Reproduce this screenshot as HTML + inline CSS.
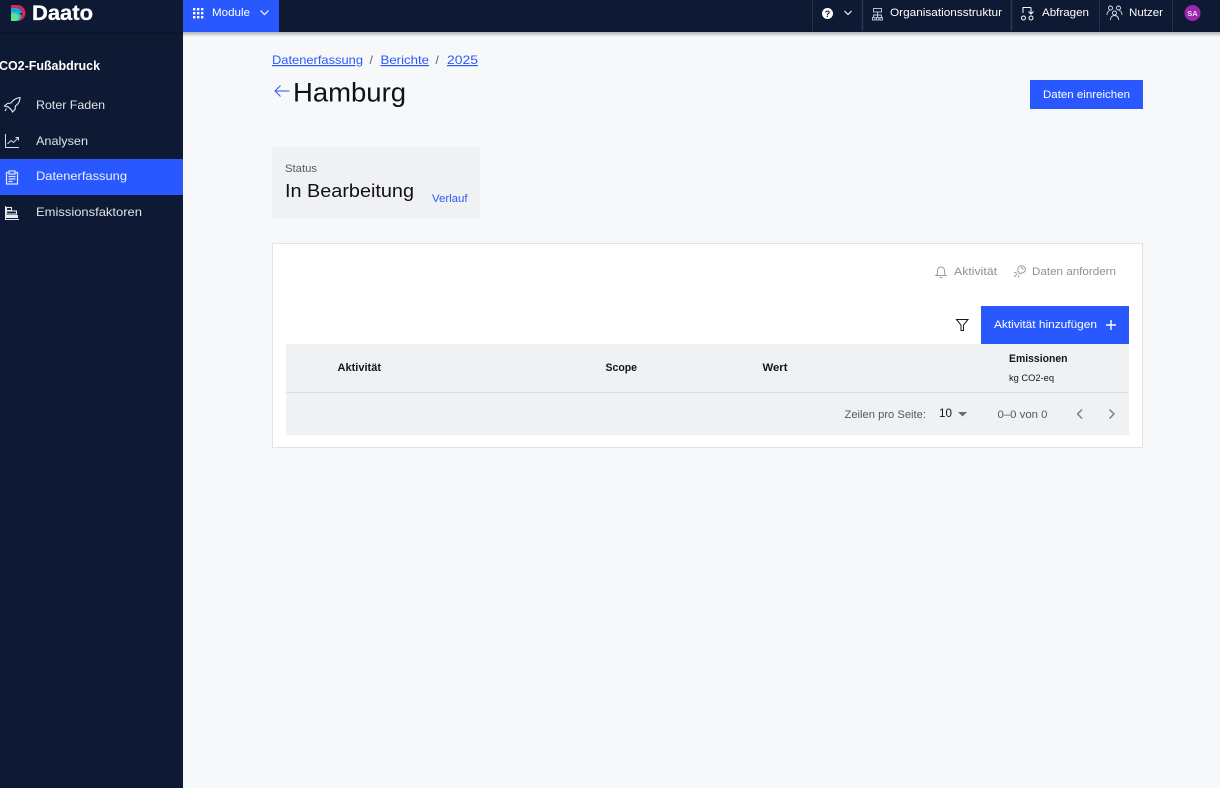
<!DOCTYPE html>
<html lang="de"><head><meta charset="utf-8"><title>Hamburg</title>
<style>
html,body{margin:0;padding:0;width:1220px;height:788px;overflow:hidden;background:#f7f8fa}
svg{display:block;position:absolute;left:0;top:0}
text{font-family:"Liberation Sans",sans-serif}
</style></head><body>
<svg width="1220" height="788" viewBox="0 0 1220 788" xmlns="http://www.w3.org/2000/svg">
<defs><linearGradient id="sh" x1="0" y1="0" x2="0" y2="1"><stop offset="0" stop-color="#000" stop-opacity=".28"/><stop offset="1" stop-color="#000" stop-opacity="0"/></linearGradient></defs>
<rect width="1220" height="788" fill="#f7f8fa"/>
<rect x="183" y="32" width="1037" height="5" fill="url(#sh)"/>
<rect x="0" y="0" width="183" height="788" fill="#0e1a33"/>
<rect x="0" y="0" width="1220" height="32" fill="#0e1a33"/>
<rect x="0" y="32" width="183" height="2" fill="#0a1529"/>
<!-- logo -->
<path d="M11 5h6.500a8 8 0 0 1 0 16H14v-3h3a5 5 0 0 0 0-10h-6z" fill="#d6265f"/>
<path d="M11 8h6a5.500 5.500 0 0 1 5 5H11z" fill="#17a5d6"/>
<path d="M11 12h5a6 6 0 0 1 5 3 5 5 0 0 1-4 6h-6z" fill="#2fbfc4"/>
<path d="M11 13.500h4.500a4 4 0 0 1 3 3.500 4 4 0 0 1-3 4H11z" fill="#5fe28a"/>
<text x="32" y="20" font-size="21" font-weight="700" fill="#fff" stroke="#fff" stroke-width=".3" textLength="61" lengthAdjust="spacingAndGlyphs">Daato</text>
<!-- module -->
<rect x="183" y="0" width="96" height="32" fill="#2a58ff"/>
<g fill="#fff"><rect x="193" y="8" width="2.400" height="2.400"/><rect x="197" y="8" width="2.400" height="2.400"/><rect x="201" y="8" width="2.400" height="2.400"/><rect x="193" y="12" width="2.400" height="2.400"/><rect x="197" y="12" width="2.400" height="2.400"/><rect x="201" y="12" width="2.400" height="2.400"/><rect x="193" y="16" width="2.400" height="2.400"/><rect x="197" y="16" width="2.400" height="2.400"/><rect x="201" y="16" width="2.400" height="2.400"/></g>
<text x="212" y="16" font-size="11" fill="#fff" textLength="38" lengthAdjust="spacingAndGlyphs">Module</text>
<path d="M260.500 10.500l4 4 4-4" fill="none" stroke="#fff" stroke-width="1.200"/>
<!-- top right -->
<g stroke="#26324a" stroke-width="1"><path d="M812.500 0v31M1099.500 0v31M1172.500 0v31"/></g>
<g stroke="#2b374f" stroke-width="1.500"><path d="M862.500 0v31M1011.500 0v31"/></g>
<circle cx="827.500" cy="13.500" r="5.500" fill="#fff"/>
<text x="827.500" y="17" font-size="9" font-weight="700" fill="#0e1a33" text-anchor="middle">?</text>
<path d="M844.500 11l3.500 3.500 3.500-3.500" fill="none" stroke="#fff" stroke-width="1.100"/>
<g fill="none" stroke="#c9ced8" stroke-width=".9"><rect x="873.500" y="8.500" width="8" height="3.500"/><path d="M877.500 12v3M873.500 17v-2h8v2M877.500 15v2"/><rect x="872.500" y="17.500" width="2.500" height="2.500"/><rect x="876.300" y="17.500" width="2.500" height="2.500"/><rect x="880" y="17.500" width="2.500" height="2.500"/></g>
<text x="890" y="16" font-size="11" fill="#fff" textLength="112" lengthAdjust="spacingAndGlyphs">Organisationsstruktur</text>
<g fill="none" stroke="#fff" stroke-width="1"><circle cx="1023.500" cy="18" r="2"/><circle cx="1031" cy="18" r="2"/><path d="M1023 13V7.500h8M1031 7.500v6M1028.500 11.500l2.500 2.500 2.500-2.500"/></g>
<text x="1042" y="16" font-size="11" fill="#fff" textLength="47" lengthAdjust="spacingAndGlyphs">Abfragen</text>
<g fill="none" stroke="#dfe3ea" stroke-width=".9"><circle cx="1110.500" cy="8" r="2"/><circle cx="1118.500" cy="8" r="2"/><circle cx="1114.500" cy="13" r="2"/><path d="M1107 15c0-3 1-4 3-4.500M1122 15c0-3-1-4-3-4.500M1110.500 20c0-3 1.500-4.500 4-4.500s4 1.500 4 4.500"/></g>
<text x="1129" y="16" font-size="11" fill="#fff" textLength="34" lengthAdjust="spacingAndGlyphs">Nutzer</text>
<circle cx="1192.500" cy="13" r="8" fill="#9c27b0"/>
<text x="1192.500" y="15.800" font-size="7.500" font-weight="700" fill="#f2d9f7" text-anchor="middle">SA</text>
<!-- sidebar -->
<text x="-1" y="70" font-size="12.500" font-weight="700" fill="#fff" textLength="101" lengthAdjust="spacingAndGlyphs">CO2-Fußabdruck</text>
<rect x="0" y="159" width="183" height="36" fill="#2a58ff"/>
<path d="M20 97.500c-4 .5-7 2.500-9 5.500l-3.500.5-3 2.500 4 1 3 3 1 2 2.500-2.500.5-3.500c3-2 4.500-4.500 4.500-8.500zM6.500 108.500L5 111" fill="none" stroke="#e8eaf0" stroke-width="1.100"/>
<text x="36" y="109" font-size="12" fill="#dfe3ea" textLength="69" lengthAdjust="spacingAndGlyphs">Roter Faden</text>
<path d="M5.500 134v13.500h13.500M7.500 144l3.500-3.500 2.500 2 4.500-4.500M15.500 137.500h3v3" fill="none" stroke="#d9dde5" stroke-width="1"/>
<text x="36" y="145" font-size="12" fill="#dfe3ea" textLength="52" lengthAdjust="spacingAndGlyphs">Analysen</text>
<g fill="none" stroke="#dfe6ff" stroke-width="1.200"><path d="M9 172.500H6.500v11.500h11v-11.500H15"/><rect x="9" y="171" width="6" height="3"/><path d="M8.500 176.500h7M8.500 179h7M8.500 181.500h4"/></g>
<text x="36" y="180" font-size="12" fill="#eaf0ff" textLength="91" lengthAdjust="spacingAndGlyphs">Datenerfassung</text>
<path d="M5.500 206v13.500h13.500" fill="none" stroke="#e8eaf0" stroke-width="1"/>
<g fill="none" stroke="#e8eaf0" stroke-width="1.100"><rect x="6.500" y="207.500" width="5" height="3"/><rect x="6.500" y="211" width="10" height="3"/></g><rect x="6" y="215" width="12" height="3" fill="#e8eaf0"/>
<text x="36" y="216" font-size="12" fill="#dfe3ea" textLength="106" lengthAdjust="spacingAndGlyphs">Emissionsfaktoren</text>
<!-- breadcrumb -->
<g fill="#2a58ff" font-size="12">
<text x="272" y="64" textLength="91" lengthAdjust="spacingAndGlyphs" text-decoration="underline">Datenerfassung</text>
<text x="380.500" y="64" textLength="48.500" lengthAdjust="spacingAndGlyphs" text-decoration="underline">Berichte</text>
<text x="447" y="64" textLength="31" lengthAdjust="spacingAndGlyphs" text-decoration="underline">2025</text></g>
<text x="369.500" y="64" font-size="12" fill="#55585f">/</text>
<text x="435.500" y="64" font-size="12" fill="#55585f">/</text>
<path d="M289.500 91h-14M280.500 85.500l-5.500 5.500 5.500 5.500" fill="none" stroke="#2a58ff" stroke-width="1"/>
<text x="293" y="101.500" font-size="27" fill="#0f1114" textLength="113" lengthAdjust="spacingAndGlyphs">Hamburg</text>
<rect x="1030" y="80" width="113" height="29" fill="#2a58ff"/>
<text x="1043" y="98" font-size="11" fill="#fff" textLength="87" lengthAdjust="spacingAndGlyphs">Daten einreichen</text>
<!-- status -->
<rect x="272" y="147" width="208" height="71" fill="#f0f1f3"/>
<text x="285" y="172" font-size="11" fill="#55585f" textLength="32" lengthAdjust="spacingAndGlyphs">Status</text>
<text x="285" y="197" font-size="18" fill="#0f1114" textLength="129" lengthAdjust="spacingAndGlyphs">In Bearbeitung</text>
<text x="432" y="202" font-size="11" fill="#2a58ff" textLength="35.500" lengthAdjust="spacingAndGlyphs">Verlauf</text>
<!-- card -->
<rect x="272.500" y="243.500" width="870" height="204" fill="#fff" stroke="#e2e3e6"/>
<path d="M936 275.500c1.500-1 1.500-2.500 1.500-5a3.500 3.500 0 0 1 7 0c0 2.500 0 4 1.500 5zM939.500 277.500h3" fill="none" stroke="#9a9ca1" stroke-width="1"/>
<text x="954" y="275" font-size="11" fill="#8d8f94" textLength="43" lengthAdjust="spacingAndGlyphs">Aktivität</text>
<g fill="none" stroke="#9a9ca1" stroke-width="1"><path d="M1018 268a4 4 0 0 1 7.500 1c0 2-1.500 3.500-3.500 4l-1.500 1-2.500-2.500z"/><path d="M1014 277l3.500-3.500M1014 273l2.500-1M1018 277.500l1-2.500M1021 267l2.500 2.500"/></g>
<text x="1032" y="275" font-size="11" fill="#8d8f94" textLength="84" lengthAdjust="spacingAndGlyphs">Daten anfordern</text>
<path d="M956.500 319.500h11.500l-4.500 5.500v5.500h-2.500V325z" fill="none" stroke="#14161a" stroke-width="1"/>
<rect x="981" y="306" width="148" height="38" fill="#2a58ff"/>
<text x="994" y="328" font-size="11" fill="#fff" textLength="103" lengthAdjust="spacingAndGlyphs">Aktivität hinzufügen</text>
<path d="M1111 320v10M1106 325h10" stroke="#fff" stroke-width="1.400" fill="none"/>
<!-- table -->
<rect x="286" y="344" width="843" height="48" fill="#f0f1f3"/>
<rect x="286" y="392" width="843" height="1" fill="#dcdde0"/>
<rect x="286" y="393" width="843" height="42" fill="#f0f1f3"/>
<g font-size="11" font-weight="700" fill="#14161a">
<text x="337.500" y="371" textLength="43.500" lengthAdjust="spacingAndGlyphs">Aktivität</text>
<text x="605.500" y="371" textLength="31.500" lengthAdjust="spacingAndGlyphs">Scope</text>
<text x="762.500" y="371" textLength="25" lengthAdjust="spacingAndGlyphs">Wert</text>
<text x="1009" y="362" textLength="58.500" lengthAdjust="spacingAndGlyphs">Emissionen</text></g>
<text x="1009" y="381" font-size="9" fill="#14161a" textLength="45" lengthAdjust="spacingAndGlyphs">kg CO2-eq</text>
<text x="844.500" y="418" font-size="11" fill="#55585f" textLength="81.500" lengthAdjust="spacingAndGlyphs">Zeilen pro Seite:</text>
<text x="939" y="417" font-size="11.500" fill="#14161a" textLength="13" lengthAdjust="spacingAndGlyphs">10</text>
<path d="M958 412h9l-4.500 4.500z" fill="#6a6c72"/>
<text x="997.500" y="418" font-size="11" fill="#55585f" textLength="50" lengthAdjust="spacingAndGlyphs">0–0 von 0</text>
<path d="M1082 409.500l-4.500 4.500 4.500 4.500M1109.500 409.500l4.500 4.500-4.500 4.500" fill="none" stroke="#73757a" stroke-width="1.300"/>
</svg>
</body></html>
